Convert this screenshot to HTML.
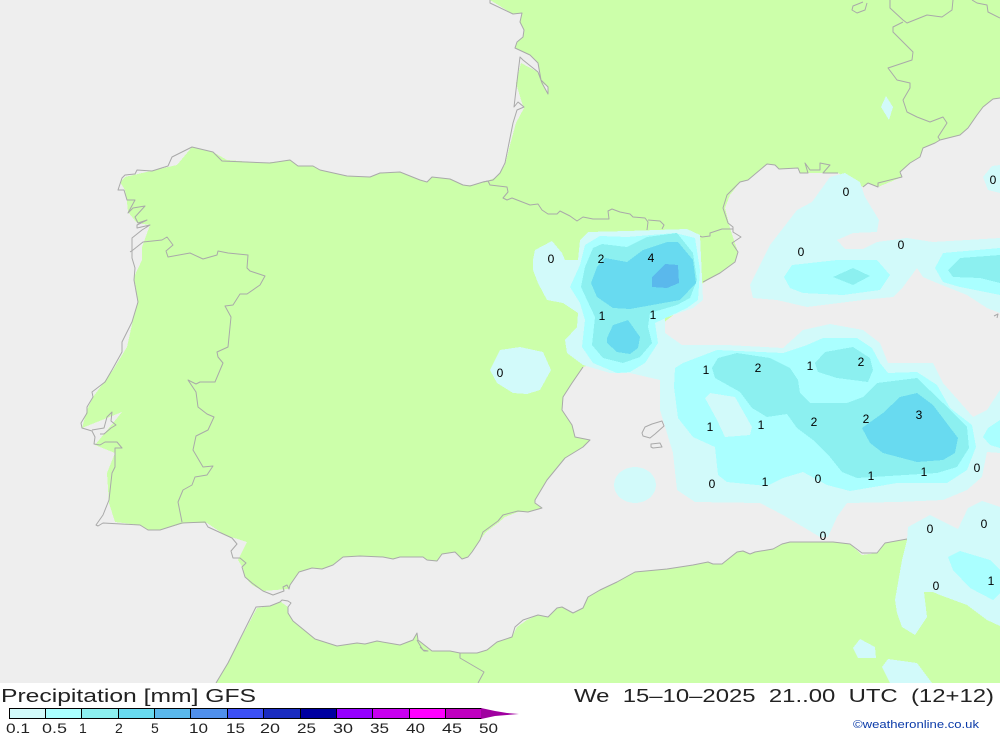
<!DOCTYPE html>
<html><head><meta charset="utf-8"><style>
html,body{margin:0;padding:0;background:#fff;width:1000px;height:733px;overflow:hidden}
svg{display:block}
text{font-family:"Liberation Sans",sans-serif}
</style></head><body>
<svg width="1000" height="733" viewBox="0 0 1000 733" xmlns="http://www.w3.org/2000/svg">
<rect width="1000" height="683" fill="#eeeeee"/>
<g fill="#ccffaa" shape-rendering="crispEdges">
<path d="M490,0L1000,0L1000,98L993,99L983,107L977,115L968,128L960,135L940,140L935,143L923,148L920,157L910,163L900,172L902,177L878,187L868,183L863,187L838,173L823,173L808,173L800,173L798,168L779,169L775,165L767,164L748,180L740,182L730,195L725,208L730,228L738,252L735,262L720,273L703,283L695,290L680,310L663,323L640,350L583,367L572,383L563,397L562,410L572,425L575,437L590,440L583,447L565,458L547,480L535,500L535,503L542,508L528,512L518,512L505,517L498,523L486,532L480,540L472,552L468,557L462,559L455,552L442,554L437,561L427,560L423,557L400,557L393,559L383,557L360,556L343,557L333,565L322,569L312,568L299,572L290,585L288,589L263,591L252,585L245,577L243,568L238,560L247,542L225,535L207,523L185,523L160,530L148,530L140,525L115,522L109,503L107,473L115,453L95,445L122,412L82,428L87,410L93,397L113,370L127,347L133,320L138,300L134,277L142,260L142,247L150,225L137,223L128,212L127,202L125,190L120,182L125,177L177,165L192,147L213,152L227,160L263,163L290,160L298,166L313,166L320,170L347,176L370,177L380,173L400,172L420,180L427,182L432,177L450,179L463,185L473,185L487,181L497,177L505,165L510,145L516,123L524,108L522,103L516,83L521,63L538,72L541,80L548,94L548,87L542,83L538,63L530,55L515,48L517,42L523,37L524,30L520,22L522,13L513,14Z"/>
<path d="M216,683L228,663L257,608L270,606L281,602L288,607L288,613L293,621L315,639L337,646L357,643L365,644L377,641L400,645L413,640L417,633L418,640L432,651L450,651L460,653L477,653L487,650L497,642L512,637L517,627L527,620L538,615L548,617L557,608L562,607L573,613L583,608L588,597L600,590L617,582L635,572L667,569L693,565L708,562L713,564L722,564L737,552L743,551L750,554L755,552L773,549L782,544L790,542L833,542L850,544L862,555L877,553L885,543L907,539L1000,539L1000,683Z"/>
</g>
<g fill="none" stroke="#a9a9a9" stroke-width="1" stroke-linejoin="round">
<path d="M490,0L490,3L513,14L522,13L520,22L524,30L523,37L517,42L515,48L530,55L538,63L541,80L548,87L548,94L542,83L538,72L523,60L520,57L518,73L514,107L518,102L524,107L517,110L513,123L505,163L500,173L493,180L483,182L470,186L463,185L450,179L432,177L427,182L420,180L400,172L380,173L370,177L347,176L320,170L313,166L298,166L290,160L270,163"/>
<path d="M270,163L222,161L213,152L192,147L172,157L168,166L152,171L137,170L135,174L125,175L122,178L118,190L124,190L127,200L135,200L128,213L133,208L145,206L135,217L138,223L147,220L137,225L137,228L150,225L142,230L132,238L132,258L135,268L134,280L138,302L132,322L128,330L122,342L122,352L112,370L105,382L92,392L93,397L87,407L87,413L81,423L82,428L92,431L95,437L94,444L100,445L105,442L117,442L122,448L115,448L115,467L112,473L109,500L103,515L96,525L98,526L103,523L140,525L148,530L160,530L182,523L205,522L208,527L232,538L237,544L231,551L233,558L240,558L246,563L242,567L245,577L252,583L263,591L273,595L284,591L283,587L287,585L289,589L290,585L299,572L312,568L322,569L333,565L343,557L360,556L383,557L393,559L400,557L423,557L427,560L437,561L442,554L455,552L462,559L468,557L472,552L480,540L483,532L498,521L503,515L518,511L528,512L542,508L535,503L535,500L547,480L565,458L583,447L590,440L575,437L572,425L562,410L563,397L572,383L583,367"/>
<path d="M92,430L104,428L107,417L112,412L111,421L116,425L111,428L104,434L100,434"/>
<path d="M130,252L133,250L143,242L162,240L167,237L173,245L166,251L168,257L190,253L203,259L217,255L218,251L228,253L248,255L247,268L250,271L265,276L260,285L247,294L240,294L233,305L225,306L231,317L228,347L217,352L218,357L223,363L215,382L200,382L196,384L188,380L196,392L198,407L207,414L214,417L208,430L196,436L193,450L203,467L213,466L207,475L195,477L192,485L183,490L178,502L182,522"/>
<path d="M483,182L488,181L490,185L507,187L508,192L503,198L507,200L512,198L530,205L538,204L542,210L548,214L557,214L560,211L570,216L577,221L583,217L593,219L609,219L608,211L612,209L620,212L630,214L633,217L645,218L648,222L647,230M648,220L660,221L664,225L662,229M693,233L702,237L710,236L710,233L722,229L733,229"/>
<path d="M703,282L720,273L735,262L738,252L732,243L741,237L733,232L733,227L728,223L723,208L727,195L740,182L748,180L767,164L775,165L779,169L798,168L800,173L808,173L805,163L810,170L820,170L820,163L830,165L823,173L838,173"/>
<path d="M863,187L868,183L878,187L878,183L902,177L900,172L910,163L920,157L923,148L935,143L940,140L960,135L968,128L977,115L983,107L993,99L1000,98"/>
<path d="M890,0L890,8L903,20L907,23L927,15L942,17L952,10L953,0M903,22L893,27L893,32L903,42L913,52L912,60L888,68L897,80L910,83L910,88L903,100L907,112L917,117L930,122L943,117L947,123L938,137L940,140M972,0L977,3L987,5L988,12L1000,18M863,2L853,6L852,10L857,13L865,10L867,3"/>
<path d="M216,683L228,663L256,607L270,606L280,602L282,600L288,601L291,603L288,607L288,613L293,621L315,639L337,646L357,643L365,644L377,641L400,645L413,640L417,633L418,640L432,651L450,651L460,653L477,653L487,650L497,642L512,637L515,627L523,620L538,615L548,617L557,608L562,607L573,613L583,608L588,597L600,590L617,582L635,572L667,569L693,565L708,562L713,564L722,564L737,552L743,551L750,554L755,552L773,549L782,544L790,542L833,542L850,544L862,553L877,553L885,543L907,539"/>
<path d="M460,653L460,658L484,672L478,683M417,640L421,647L423,650L428,651L424,651L420,647"/>
<path d="M642,433L645,427L652,424L662,421L664,426L655,434L650,438L643,436ZM651,444L660,443L662,447L653,448L651,447ZM994,316L998,314L997,318"/>
</g>
<g shape-rendering="crispEdges">
<g fill="#d2fafa">
<path d="M533,260L535,250L552,241L562,253L565,260L578,260L580,240L588,232L627,231L687,229L700,235L703,300L693,308L665,318L665,333L682,345L710,345L727,345L783,348L803,330L830,324L863,330L880,343L888,363L933,363L943,383L973,417L987,410L1000,390L1000,453L987,452L982,477L967,490L943,500L897,502L847,503L837,517L828,537L820,537L783,515L760,503L695,502L677,490L673,453L660,410L660,380L630,373L610,373L583,365L567,353L565,340L577,327L578,313L563,303L547,300L538,283L533,270Z"/>
<path d="M490,370L500,350L520,347L543,352L551,370L540,390L527,394L513,393L497,383Z"/>
<ellipse cx="635" cy="485" rx="21" ry="18"/>
<path d="M881,107L886,96L893,107L889,120Z"/>
<path d="M750,285L770,245L787,223L797,210L812,202L830,177L845,173L860,182L865,197L879,220L877,232L853,233L837,240L845,249L863,249L877,242L907,238L933,242L1000,238L1000,313L987,308L967,295L937,283L923,277L917,268L903,287L893,297L863,300L807,307L777,300L753,298Z"/>
<path d="M983,177L992,166L1000,165L1000,193L988,190Z"/>
<path d="M907,540L908,527L930,515L958,529L968,508L982,501L1000,507L1000,626L987,620L967,605L940,595L933,592L924,592L927,617L915,635L902,627L897,613L895,600L902,560Z"/>
<path d="M853,648L860,639L875,647L876,658L858,658Z"/>
<path d="M882,667L888,659L917,663L932,683L890,683Z"/>
</g>
<g fill="#aaffff">
<path d="M570,287L580,265L585,245L600,236L627,237L675,233L695,238L700,270L698,300L687,308L655,323L658,343L645,363L630,372L617,373L593,363L582,347L585,320L580,303Z"/>
<path fill-rule="evenodd" d="M675,368L683,363L717,350L783,353L807,345L823,338L857,338L872,348L880,363L888,373L917,372L937,385L950,408L972,425L976,447L967,470L947,483L897,483L850,491L827,485L803,472L783,478L767,486L727,482L718,475L715,447L693,437L678,418L674,387ZM705,398L710,393L735,397L752,427L750,435L725,437L717,420Z"/>
<path d="M988,428L1000,420L1000,448L990,445L983,437Z"/>
<path d="M784,277L792,265L837,260L877,260L890,275L880,290L843,295L803,293L790,288Z"/>
<path d="M935,268L943,253L1000,248L1000,295L960,287L943,282Z"/>
<path d="M948,557L960,551L990,560L1000,570L1000,593L993,600L970,588L953,570Z"/>
</g>
<g fill="#8cf0f0">
<path d="M581,287L585,267L593,248L602,244L627,247L647,237L677,233L693,253L697,280L690,298L677,305L650,313L648,327L652,343L640,357L623,363L603,358L592,345L595,317L587,300Z"/>
<path d="M712,368L718,358L737,353L770,358L790,368L798,380L800,393L810,403L847,403L863,397L877,383L917,378L943,403L967,427L969,448L957,467L937,473L857,478L842,472L830,457L813,440L797,428L787,414L767,417L752,408L740,392L715,378Z"/>
<path d="M815,363L825,352L853,347L870,358L873,370L868,382L837,378L818,372Z"/>
<path d="M833,277L853,268L870,276L853,285Z"/>
<path d="M948,270L960,258L1000,255L1000,283L980,278L953,277Z"/>
</g>
<g fill="#68daf0">
<path d="M591,283L597,267L605,258L627,262L643,250L667,242L678,242L693,260L696,283L680,300L630,309L613,308L597,297Z"/>
<path d="M607,338L613,325L628,320L640,337L638,348L630,354L617,352L607,343Z"/>
<path d="M862,428L883,413L900,397L917,393L933,405L958,438L955,453L943,460L917,462L883,453L870,443Z"/>
</g>
<path fill="#5ab8ec" d="M652,277L665,264L678,265L679,283L667,288L652,287Z"/>
</g>
<g font-size="12" fill="#000" text-anchor="middle">
<text x="551" y="263">0</text><text x="601" y="263">2</text><text x="651" y="262">4</text><text x="602" y="320">1</text><text x="653" y="319">1</text><text x="500" y="377">0</text>
<text x="706" y="374">1</text><text x="758" y="372">2</text><text x="810" y="370">1</text><text x="861" y="366">2</text><text x="866" y="423">2</text><text x="919" y="419">3</text><text x="814" y="426">2</text><text x="761" y="429">1</text><text x="710" y="431">1</text>
<text x="712" y="488">0</text><text x="765" y="486">1</text><text x="818" y="483">0</text><text x="871" y="480">1</text><text x="924" y="476">1</text><text x="977" y="472">0</text><text x="823" y="540">0</text>
<text x="846" y="196">0</text><text x="801" y="256">0</text><text x="901" y="249">0</text><text x="993" y="184">0</text><text x="930" y="533">0</text><text x="984" y="528">0</text><text x="936" y="590">0</text><text x="991" y="585">1</text>
</g>
<rect y="683" width="1000" height="50" fill="#fff"/>
<text x="1" y="702" font-size="18" fill="#222" textLength="255" lengthAdjust="spacingAndGlyphs">Precipitation [mm] GFS</text>
<text x="574" y="702" font-size="18" fill="#222" textLength="420" lengthAdjust="spacingAndGlyphs" xml:space="preserve">We  15–10–2025  21..00  UTC  (12+12)</text>
<text x="853" y="728" font-size="11" fill="#0a3aa8" textLength="126" lengthAdjust="spacingAndGlyphs">©weatheronline.co.uk</text>
<g shape-rendering="crispEdges" stroke="#000" stroke-width="1">
<rect x="9.5" y="708.5" width="36" height="10" fill="#d2fafa"/>
<rect x="45.5" y="708.5" width="36" height="10" fill="#aaffff"/>
<rect x="81.5" y="708.5" width="37" height="10" fill="#8cf0f0"/>
<rect x="118.5" y="708.5" width="36" height="10" fill="#68daf0"/>
<rect x="154.5" y="708.5" width="36" height="10" fill="#5ab8ec"/>
<rect x="190.5" y="708.5" width="37" height="10" fill="#5090ec"/>
<rect x="227.5" y="708.5" width="36" height="10" fill="#3c50f5"/>
<rect x="263.5" y="708.5" width="37" height="10" fill="#1a2cc0"/>
<rect x="300.5" y="708.5" width="36" height="10" fill="#0000a0"/>
<rect x="336.5" y="708.5" width="36" height="10" fill="#9600fe"/>
<rect x="372.5" y="708.5" width="37" height="10" fill="#c800f0"/>
<rect x="409.5" y="708.5" width="36" height="10" fill="#ff00ff"/>
<rect x="445.5" y="708.5" width="36" height="10" fill="#c000c0"/>
</g>
<path d="M481,708L495,711L507,713L519,714L507,715L495,716L481,719Z" fill="#a000a0"/>
<g font-size="14" fill="#222">
<text x="6" y="733" textLength="24" lengthAdjust="spacingAndGlyphs">0.1</text><text x="42" y="733" textLength="25" lengthAdjust="spacingAndGlyphs">0.5</text><text x="79" y="733">1</text><text x="115" y="733">2</text><text x="151" y="733">5</text><text x="189" y="733" textLength="19" lengthAdjust="spacingAndGlyphs">10</text><text x="226" y="733" textLength="19" lengthAdjust="spacingAndGlyphs">15</text><text x="260" y="733" textLength="20" lengthAdjust="spacingAndGlyphs">20</text><text x="297" y="733" textLength="19" lengthAdjust="spacingAndGlyphs">25</text><text x="333" y="733" textLength="20" lengthAdjust="spacingAndGlyphs">30</text><text x="370" y="733" textLength="19" lengthAdjust="spacingAndGlyphs">35</text><text x="406" y="733" textLength="19" lengthAdjust="spacingAndGlyphs">40</text><text x="442" y="733" textLength="20" lengthAdjust="spacingAndGlyphs">45</text><text x="479" y="733" textLength="19" lengthAdjust="spacingAndGlyphs">50</text>
</g>
</svg>
</body></html>
